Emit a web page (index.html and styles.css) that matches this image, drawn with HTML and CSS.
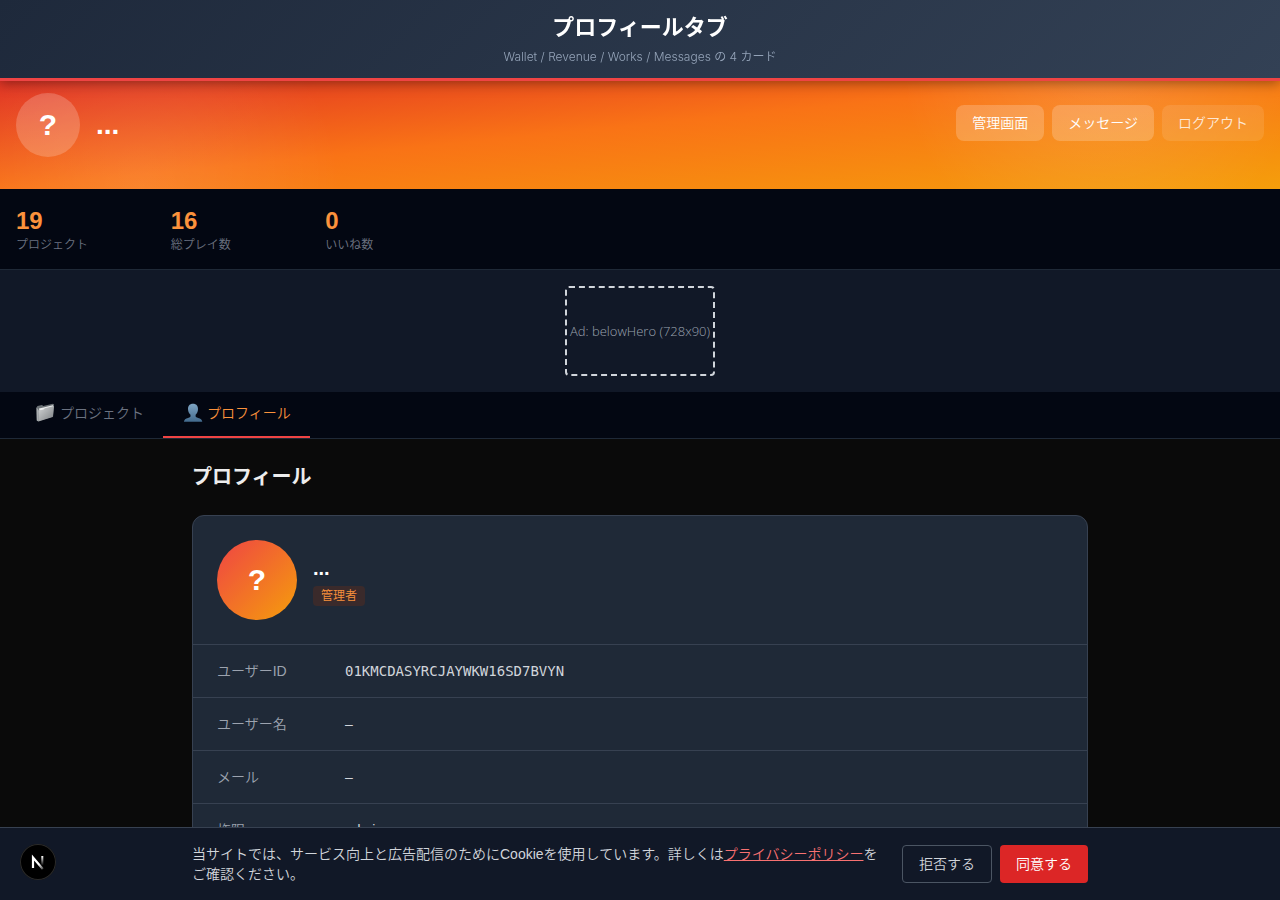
FILE: index.html
```html
<!DOCTYPE html>
<html lang="ja">
<head>
<meta charset="utf-8">
<meta name="viewport" content="width=device-width, initial-scale=1">
<title>プロフィールタブ</title>
<link rel="stylesheet" href="styles.css">
</head>
<body>
<header class="banner">
  <h1 class="banner-title">プロフィールタブ</h1>
  <p class="banner-sub">Wallet / Revenue / Works / Messages の 4 カード</p>
</header>

<section class="hero">
  <div class="hero-user">
    <div class="avatar avatar-hero">?</div>
    <p class="hero-name">...</p>
  </div>
  <div class="hero-actions">
    <button type="button" class="hero-btn">管理画面</button>
    <button type="button" class="hero-btn">メッセージ</button>
    <button type="button" class="hero-btn hero-btn-quiet">ログアウト</button>
  </div>
</section>

<section class="stats">
  <dl class="stats-grid">
    <div class="stat"><dt>プロジェクト</dt><dd>19</dd></div>
    <div class="stat"><dt>総プレイ数</dt><dd>16</dd></div>
    <div class="stat"><dt>いいね数</dt><dd>0</dd></div>
  </dl>
</section>

<aside class="ad"><div class="ad-box">Ad: belowHero (728x90)</div></aside>

<nav class="tabs">
  <button type="button" class="tab">
    <svg class="tab-icon" viewBox="0 0 20 20" aria-hidden="true">
      <defs>
        <linearGradient id="folder" x1="0" y1="0" x2="1" y2="1"><stop offset="0" stop-color="#d3d5d6"/><stop offset="1" stop-color="#7b7f82"/></linearGradient>
      </defs>
      <path d="M.5 4.500l1-1.500 4.500-1 1.200 1L17 .8l1 .8-.9 12L2 18.200.8 17.600z" fill="#6d7377"/>
      <path d="M3 5.500l4.500-1 9.500-2.200.3 2.200L3.500 8z" fill="#eceeee"/>
      <path d="M3 7.600l4.600-1.100 1.100-1.300 9.300-2.200-1.200 11L2.400 18.500z" fill="url(#folder)"/>
      <path d="M.5 4.500L3 7.600l-.6 10.900-1.600-.9z" fill="#a9adb0"/>
    </svg>
    プロジェクト
  </button>
  <button type="button" class="tab tab-active">
    <svg class="tab-icon" viewBox="0 0 20 20" aria-hidden="true">
      <defs>
        <linearGradient id="person" x1="0" y1="0" x2="0" y2="1"><stop offset="0" stop-color="#7fa5c4"/><stop offset="1" stop-color="#426a8d"/></linearGradient>
      </defs>
      <path d="M10 .8c3.300 0 5.100 2.200 5 5.400-.1 2.500-1 4.500-2.400 5.600v1.500c0 .8 1 1.100 2.500 1.600 2.500.8 4 1.500 4.200 3.900H.9c.2-2.400 1.700-3.100 4.200-3.900 1.500-.5 2.400-.8 2.400-1.600v-1.500C6.100 10.700 5.100 8.700 5 6.200 4.900 3 6.700.8 10 .8z" fill="url(#person)"/>
    </svg>
    プロフィール
  </button>
</nav>

<main class="content">
  <h2 class="content-title">プロフィール</h2>
  <section class="card">
    <div class="card-head">
      <div class="avatar avatar-card">?</div>
      <div>
        <p class="card-name">...</p>
        <span class="badge">管理者</span>
      </div>
    </div>
    <dl class="rows">
      <div class="row"><dt>ユーザーID</dt><dd class="mono">01KMCDASYRCJAYWKW16SD7BVYN</dd></div>
      <div class="row"><dt>ユーザー名</dt><dd>–</dd></div>
      <div class="row"><dt>メール</dt><dd>–</dd></div>
      <div class="row"><dt>権限</dt><dd>admin</dd></div>
    </dl>
  </section>
</main>

<div class="cookie">
  <div class="cookie-inner">
    <p class="cookie-text">当サイトでは、サービス向上と広告配信のためにCookieを使用しています。詳しくは<a href="#privacy">プライバシーポリシー</a>をご確認ください。</p>
    <div class="cookie-actions">
      <button type="button" class="cookie-btn cookie-decline">拒否する</button>
      <button type="button" class="cookie-btn cookie-accept">同意する</button>
    </div>
  </div>
</div>

<button type="button" class="dev" aria-label="Next.js">
  <svg viewBox="0 0 36 36" aria-hidden="true">
    <defs>
      <linearGradient id="n1" x1="0" y1="0" x2="1" y2="1"><stop offset=".6" stop-color="#fff"/><stop offset="1" stop-color="#fff" stop-opacity=".3"/></linearGradient>
      <linearGradient id="n2" x1="0" y1="0" x2="0" y2="1"><stop offset="0" stop-color="#fff"/><stop offset="1" stop-color="#fff" stop-opacity="0"/></linearGradient>
    </defs>
    <path d="M13 24V13.500L22.800 25" fill="none" stroke="url(#n1)" stroke-width="2.200"/>
    <rect x="21.300" y="12" width="2" height="9.500" fill="url(#n2)"/>
  </svg>
</button>
</body>
</html>
```

FILE: styles.css
```css
* { box-sizing: border-box; margin: 0; }

body {
  background: #0a0a0a;
  color: #ededed;
  font-family: "Liberation Sans", "Noto Sans CJK JP", sans-serif;
  font-size: 14px;
  font-weight: 350;
  line-height: 20px;
  padding: 61px 0 72px;
}

button { font: inherit; border: 0; cursor: pointer; }

.banner {
  position: fixed;
  inset: 0 0 auto;
  z-index: 1;
  padding: 12px 16px;
  text-align: center;
  background: linear-gradient(135deg, #1e293b, #334155);
  border-bottom: 3px solid #ef4444;
  box-shadow: 0 2px 12px rgba(0, 0, 0, 0.4);
}
.banner-title { font-size: 22px; line-height: 32px; font-weight: 700; color: #fff; }
.banner-sub {
  margin-top: 4px;
  font-family: Inter, "Noto Sans CJK JP", sans-serif;
  font-size: 12px;
  line-height: 18px;
  color: #94a3b8;
}

.hero {
  display: flex;
  justify-content: space-between;
  align-items: flex-start;
  padding: 32px 16px;
  background:
    radial-gradient(circle at 11% 100%, rgba(255, 255, 255, 0.1), transparent 200px),
    radial-gradient(circle at 86% 0, rgba(255, 255, 255, 0.13), transparent 200px),
    linear-gradient(to bottom right, #dc2626, #f97316 50%, #f59e0b);
}
.hero-user { display: flex; align-items: center; gap: 16px; }
.avatar {
  display: flex;
  align-items: center;
  justify-content: center;
  flex: none;
  border-radius: 50%;
  color: #fff;
  font-size: 30px;
  font-weight: 700;
}
.avatar-hero { width: 64px; height: 64px; background: rgba(255, 255, 255, 0.2); }
.hero-name { font-size: 28px; line-height: 36px; font-weight: 700; color: #fff; }
.hero-actions { display: flex; gap: 8px; padding-top: 12px; }
.hero-btn {
  padding: 8px 16px;
  border-radius: 8px;
  background: rgba(255, 255, 255, 0.2);
  color: #fff;
}
.hero-btn-quiet { background: rgba(255, 255, 255, 0.1); color: rgba(255, 255, 255, 0.8); }

.stats { padding: 16px; background: #030712; border-bottom: 1px solid #1f2937; }
.stats-grid { display: grid; grid-template-columns: repeat(3, 1fr); gap: 16px; max-width: 448px; }
.stat { display: flex; flex-direction: column-reverse; }
.stat dt { font-size: 12px; line-height: 16px; color: #6b7280; }
.stat dd { font-size: 24px; line-height: 32px; font-weight: 700; color: #fb923c; }

.ad { display: flex; justify-content: center; padding: 16px; background: #111827; }
.ad-box {
  display: flex;
  align-items: center;
  justify-content: center;
  min-width: 150px;
  height: 90px;
  border: 2px dashed #d1d5db;
  border-radius: 4px;
  font-family: "Open Sans", sans-serif;
  font-weight: 300;
  font-size: 13px;
  white-space: nowrap;
  color: #9ca3af;
}

.tabs { display: flex; padding: 0 16px; background: #030712; border-bottom: 1px solid #1f2937; }
.tab {
  display: flex;
  align-items: center;
  gap: 4px;
  padding: 10px 19px 12px 20px;
  border-bottom: 2px solid transparent;
  background: none;
  color: #6b7280;
  line-height: 22px;
}
.tab-active { border-bottom-color: #ef4444; color: #fb923c; }
.tab-icon { width: 20px; height: 20px; }

.content { max-width: 944px; margin: 0 auto; padding: 24px; }
.content-title { margin-bottom: 24px; font-size: 20px; line-height: 28px; font-weight: 700; }
.card { border: 1px solid #374151; border-radius: 12px; background: #1f2937; overflow: hidden; }
.card-head { display: flex; align-items: center; gap: 16px; padding: 24px; }
.avatar-card { width: 80px; height: 80px; background: linear-gradient(135deg, #ef4444, #f59e0b); }
.card-name { font-size: 20px; line-height: 28px; font-weight: 700; color: #fff; }
.badge {
  display: block;
  width: max-content;
  margin-top: 4px;
  padding: 2px 8px;
  border-radius: 4px;
  background: rgba(124, 45, 18, 0.3);
  color: #fb923c;
  font-size: 12px;
  line-height: 16px;
}
.row { display: flex; padding: 16px 24px; border-top: 1px solid #374151; }
.row dt { width: 128px; flex: none; color: #9ca3af; }
.row dd { color: #d1d5db; }
.row .mono { font-family: "DejaVu Sans Mono", monospace; }

.cookie {
  position: fixed;
  inset: auto 0 0;
  padding: 16px;
  background: #111827;
  border-top: 1px solid #374151;
}
.cookie-inner { display: flex; align-items: center; gap: 16px; max-width: 896px; margin: 0 auto; }
.cookie-text { flex: 1; color: #d1d5db; }
.cookie-text a { color: #f87171; }
.cookie-actions { display: flex; gap: 8px; flex: none; }
.cookie-btn { padding: 8px 16px; border-radius: 4px; }
.cookie-decline { border: 1px solid #4b5563; background: none; color: #d1d5db; }
.cookie-accept { background: #dc2626; color: #fff; }

.dev {
  position: fixed;
  left: 20px;
  bottom: 20px;
  width: 36px;
  height: 36px;
  padding: 0;
  border-radius: 50%;
  background: #000;
  box-shadow: inset 0 0 0 1px #2b2b2b;
}
.dev svg { display: block; width: 36px; height: 36px; }
```
